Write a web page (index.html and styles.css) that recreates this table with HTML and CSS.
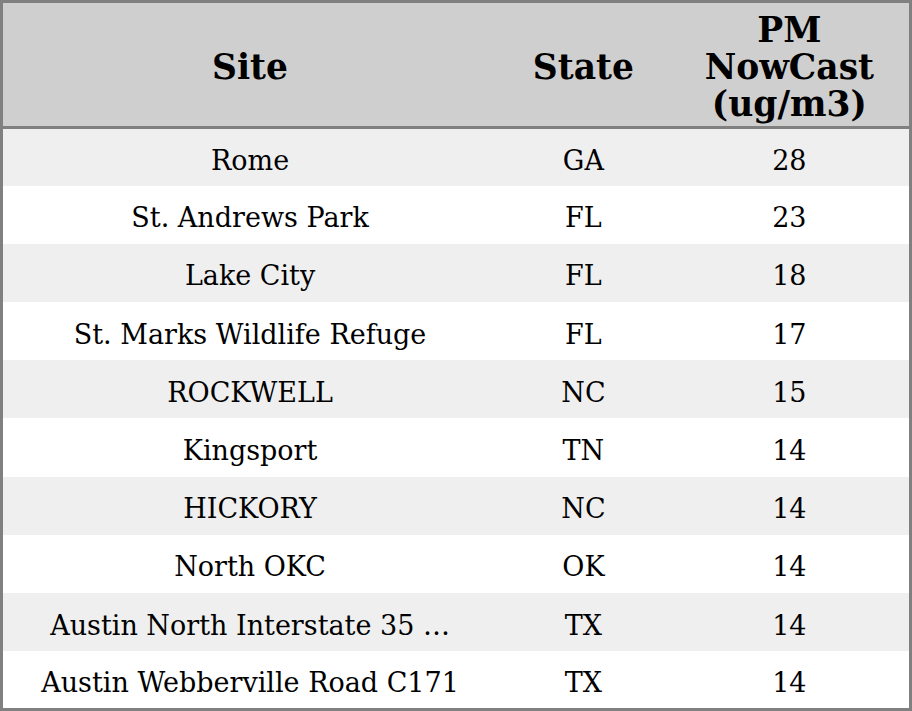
FILE: index.html
```html
<!DOCTYPE html>
<html>
<head>
<meta charset="utf-8">
<link rel="stylesheet" href="styles.css">
</head>
<body>
<table class="grid">
  <colgroup>
    <col class="c-site">
    <col class="c-state">
    <col class="c-pm">
  </colgroup>
  <thead>
    <tr class="head">
      <th>Site</th>
      <th>State</th>
      <th>PM NowCast (ug/m3)</th>
    </tr>
  </thead>
  <tbody>
    <tr class="odd"><td>Rome</td><td>GA</td><td>28</td></tr>
    <tr><td>St. Andrews Park</td><td>FL</td><td>23</td></tr>
    <tr class="odd"><td>Lake City</td><td>FL</td><td>18</td></tr>
    <tr><td>St. Marks Wildlife Refuge</td><td>FL</td><td>17</td></tr>
    <tr class="odd"><td>ROCKWELL</td><td>NC</td><td>15</td></tr>
    <tr><td>Kingsport</td><td>TN</td><td>14</td></tr>
    <tr class="odd"><td>HICKORY</td><td>NC</td><td>14</td></tr>
    <tr><td>North OKC</td><td>OK</td><td>14</td></tr>
    <tr class="odd"><td>Austin North Interstate 35 …</td><td>TX</td><td>14</td></tr>
    <tr><td>Austin Webberville Road C171</td><td>TX</td><td>14</td></tr>
  </tbody>
</table>
</body>
</html>
```
FILE: styles.css
```css
html, body {
  margin: 0;
  padding: 0;
  background: #ffffff;
}
.grid {
  width: 912px;
  height: 711px;
  border-collapse: collapse;
  table-layout: fixed;
  border: 3px solid #808080;
  font-family: "DejaVu Serif", serif;
  color: #000;
}
.c-site { width: 494px; }
.c-state { width: 172px; }
.c-pm { width: 240px; }
.head {
  background: #cfcfcf;
  height: 125px;
  border-bottom: 3px solid #808080;
}
.head th {
  font-size: 34.5px;
  font-weight: bold;
  line-height: 37px;
  padding: 9px 20px 3px 20px;
  text-align: center;
  vertical-align: middle;
}
tbody tr {
  height: 57.7px;
}
tbody td {
  font-size: 27px;
  text-align: center;
  vertical-align: middle;
  padding: 6px 4px 0 4px;
  white-space: nowrap;
}
tr.odd {
  background: #efefef;
}
```
